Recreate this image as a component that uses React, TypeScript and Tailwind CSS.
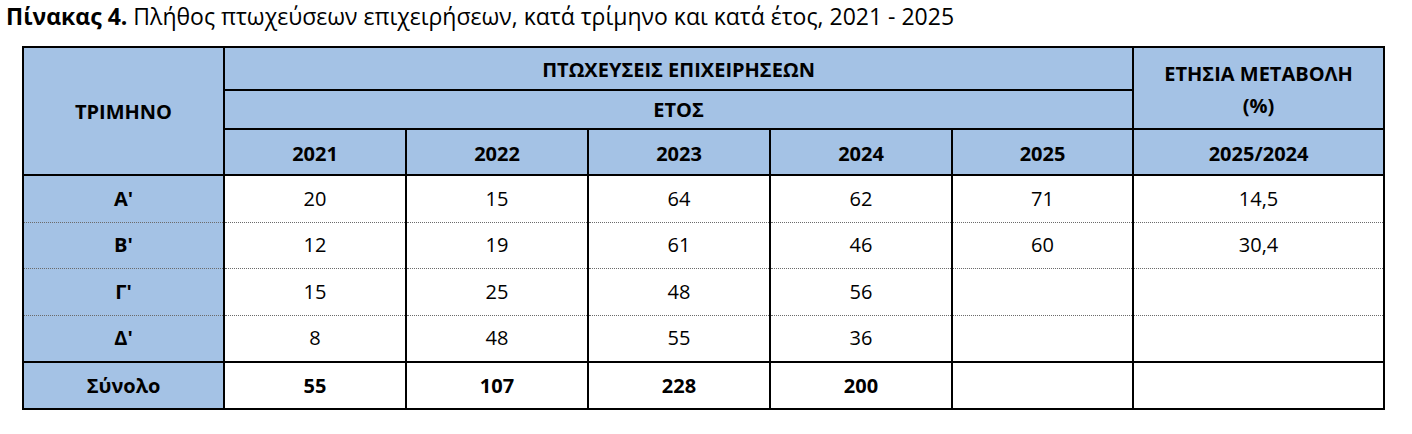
import React from 'react';

// Rows of the table: quarter label, yearly counts, annual change
const rows = [
    { q: "Α'", v: ['20', '15', '64', '62', '71'], ch: '14,5' },
    { q: "Β'", v: ['12', '19', '61', '46', '60'], ch: '30,4' },
    { q: "Γ'", v: ['15', '25', '48', '56', ''], ch: '' },
    { q: "Δ'", v: ['8', '48', '55', '36', ''], ch: '' },
];

const years = ['2021', '2022', '2023', '2024', '2025'];
const totals = ['55', '107', '228', '200', ''];

const App: React.FC = () => {
    return (
        <div
            className="bg-white w-[1412px] h-[434px] pt-[1px] pl-[6px] text-black"
            style={{ fontFamily: '"Open Sans", "Noto Sans", sans-serif' }}
        >
            <p className="text-[23px] leading-[30px] whitespace-nowrap">
                <span className="font-bold">Πίνακας 4.</span> Πλήθος πτωχεύσεων επιχειρήσεων, κατά τρίμηνο και κατά έτος, 2021 - 2025
            </p>
            <table className="mt-[15px] ml-[16px] border-collapse table-fixed w-[1361px] text-[20px] text-center">
                <colgroup>
                    <col className="w-[201px]" />
                    <col className="w-[182px]" />
                    <col className="w-[182px]" />
                    <col className="w-[182px]" />
                    <col className="w-[182px]" />
                    <col className="w-[181px]" />
                    <col className="w-[251px]" />
                </colgroup>
                <thead className="font-bold bg-[#a4c2e5]">
                    <tr className="h-[43px]">
                        <th rowSpan={3} className="border-2 border-black pt-[2px]">ΤΡΙΜΗΝΟ</th>
                        <th colSpan={5} className="border-2 border-black pt-[2px]">ΠΤΩΧΕΥΣΕΙΣ ΕΠΙΧΕΙΡΗΣΕΩΝ</th>
                        <th rowSpan={2} className="border-2 border-black leading-[32px] pt-[4px]">
                            ΕΤΗΣΙΑ ΜΕΤΑΒΟΛΗ<br />(%)
                        </th>
                    </tr>
                    <tr className="h-[39px]">
                        <th colSpan={5} className="border-2 border-black">ΕΤΟΣ</th>
                    </tr>
                    <tr className="h-[46px]">
                        {years.map((y) => (
                            <th key={y} className="border-2 border-black pt-[4px]">{y}</th>
                        ))}
                        <th className="border-2 border-black pt-[4px]">2025/2024</th>
                    </tr>
                </thead>
                <tbody>
                    {rows.map((r, i) => {
                        const cell = `border-x-2 border-black ${
                            i === 3 ? '' : 'border-b border-b-[#6b6b6b] [border-bottom-style:dotted]'
                        }`;
                        return (
                            <tr key={r.q} className={i === 1 ? 'h-[46px]' : 'h-[47px]'}>
                                <td className={`bg-[#a4c2e5] font-bold ${cell}`}>{r.q}</td>
                                {r.v.map((v, j) => (
                                    <td key={j} className={cell}>{v}</td>
                                ))}
                                <td className={cell}>{r.ch}</td>
                            </tr>
                        );
                    })}
                    <tr className="h-[47px] font-bold">
                        <td className="bg-[#a4c2e5] border-2 border-black">Σύνολο</td>
                        {totals.map((t, j) => (
                            <td key={j} className="border-2 border-black">{t}</td>
                        ))}
                        <td className="border-2 border-black"></td>
                    </tr>
                </tbody>
            </table>
        </div>
    );
};

export default App;
